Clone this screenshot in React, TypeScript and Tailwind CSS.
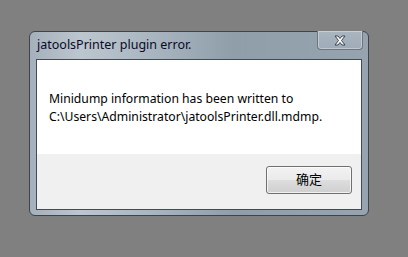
import React from "react";

const font = { fontFamily: '"Segoe UI", "Noto Sans", "Noto Sans CJK SC", sans-serif' };

const CloseGlyph = () => (
  <svg width="14" height="11" viewBox="0 0 14 11">
    <path
      d="M2 1 L5 1 L7 3.5 L9 1 L12 1 L8.5 5.5 L12 10 L9 10 L7 7.5 L5 10 L2 10 L5.5 5.5 Z"
      fill="#ffffff"
      stroke="#3a4250"
      strokeWidth="1"
      strokeLinejoin="round"
    />
  </svg>
);

const App = () => {
  return (
    <div className="w-[408px] h-[257px] bg-[#808080] pt-[31px] pl-[29px]" style={font}>
      <div className="w-[340px] h-[185px] rounded-[6px] border border-[#3d4450] bg-[linear-gradient(90deg,#a4b0bb_0%,#bcc6ce_15%,#a5b2bd_40%,#8f9ea9_60%,#97a4af_100%)] flex flex-col px-[6px] pb-[5px]">
        <div className="h-[27px] flex items-start justify-between">
          <div className="pt-[5px] pl-[1px] text-[12.5px] leading-[16px] text-[#0a0a28]">
            jatoolsPrinter plugin error.
          </div>
          <div className="w-[46px] h-[19px] -mt-px -mr-px rounded-b-[4px] border border-t-0 border-[#6b7682] bg-[linear-gradient(180deg,#a9b5bf,#9fabb6)] shadow-[inset_0_0_0_1px_rgba(255,255,255,0.35)] flex items-center justify-center">
            <CloseGlyph />
          </div>
        </div>
        <div className="flex-1 border border-[#414b57] bg-white flex flex-col">
          <div className="h-[94px] pl-[12px] pt-[30px] text-[12.2px] leading-[17.5px] text-black">
            <div>Minidump information has been written to</div>
            <div>C:\Users\Administrator\jatoolsPrinter.dll.mdmp.</div>
          </div>
          <div className="flex-1 bg-[#f0f0f0] flex justify-end items-start pt-[12px] pr-[9px]">
            <div className="w-[86px] h-[28px] rounded-[3px] border border-[#707070] bg-[linear-gradient(180deg,#f2f2f2_0%,#ebebeb_48%,#dddddd_52%,#cfcfcf_100%)] shadow-[inset_0_0_0_1px_rgba(255,255,255,0.7)] flex items-center justify-center text-[13px] text-black">
              确定
            </div>
          </div>
        </div>
      </div>
    </div>
  );
};

export default App;
